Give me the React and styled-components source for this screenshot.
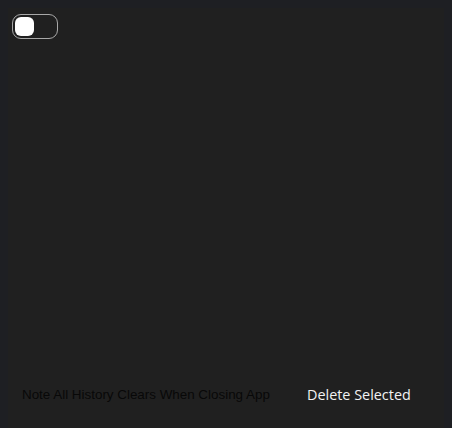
import React, { useState } from "react";
import styled, { createGlobalStyle } from "styled-components";

const GlobalStyle = createGlobalStyle`
  html, body {
    margin: 0;
    padding: 0;
    height: 100%;
    background: #1e1f23;
    overflow: hidden;
  }
  body {
    padding: 8px 8px 0 8px;
    box-sizing: border-box;
  }
`;

const Panel = styled.div`
  display: flex;
  flex-direction: column;
  justify-content: space-between;
  height: calc(100vh - 8px);
  background: #202020;
  box-sizing: border-box;
  padding: 6px 0 0 4px;
`;

const Toggle = styled.button`
  position: relative;
  width: 46px;
  height: 25px;
  padding: 0;
  border: 1px solid #a8a8a8;
  border-radius: 9px;
  background: transparent;
  cursor: pointer;
`;

const Knob = styled.span`
  position: absolute;
  top: 2px;
  left: ${(p) => (p.$on ? "24px" : "2px")};
  width: 19px;
  height: 19px;
  border-radius: 6px;
  background: #ffffff;
`;

const Footer = styled.div`
  display: flex;
  align-items: center;
  padding: 0 0 16px 10px;
  height: 36px;
`;

const Note = styled.span`
  font-family: "Liberation Sans", Arial, sans-serif;
  font-size: 13.4px;
  color: #080808;
  width: 285px;
`;

const DeleteButton = styled.button`
  border: none;
  background: transparent;
  padding: 0;
  font-family: "Open Sans", "Noto Sans", sans-serif;
  font-size: 14.4px;
  color: #f2f2f2;
  cursor: pointer;
`;

export default function App() {
  const [on, setOn] = useState(false);
  return (
    <>
      <GlobalStyle />
      <Panel>
        <Toggle onClick={() => setOn(!on)}>
          <Knob $on={on} />
        </Toggle>
        <Footer>
          <Note>Note All History Clears When Closing App</Note>
          <DeleteButton>Delete Selected</DeleteButton>
        </Footer>
      </Panel>
    </>
  );
}
